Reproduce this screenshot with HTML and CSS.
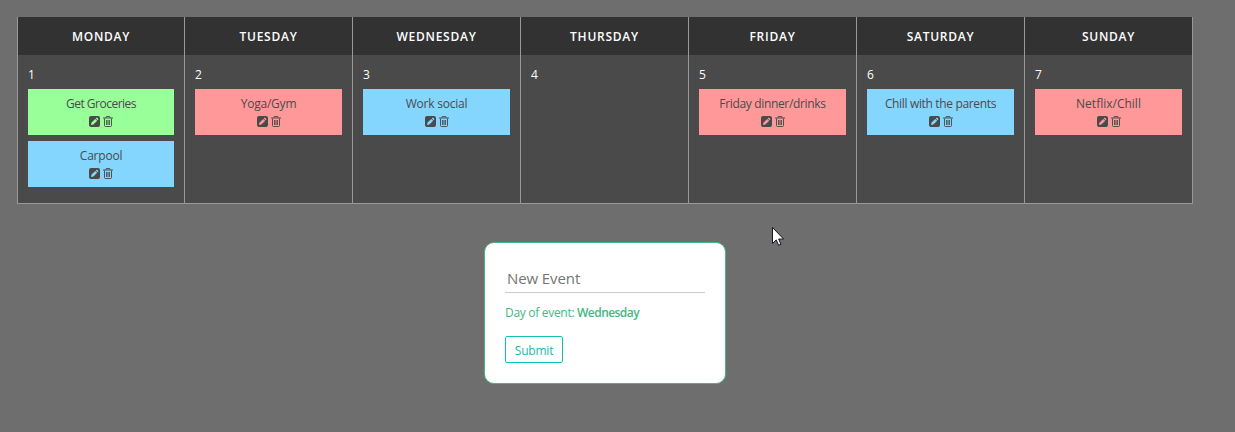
FILE: index.html
```html
<!DOCTYPE html>
<html lang="en">
<head>
<meta charset="utf-8">
<title>Weekly calendar</title>
<link rel="stylesheet" href="styles.css">
</head>
<body>
<svg class="sprite" aria-hidden="true">
  <symbol id="edit" viewBox="0 0 11 11"><path fill-rule="evenodd" d="M2 0h7a2 2 0 0 1 2 2v7a2 2 0 0 1-2 2H2a2 2 0 0 1-2-2V2a2 2 0 0 1 2-2zM2 9l.5-2.4L6.3 2.9l1.9 1.9-3.8 3.8zM6.8 2.4l.6-.6q.4-.3.8 0l1 1q.4.4 0 .8l-.6.7z"/></symbol>
  <symbol id="trash" viewBox="0 0 10 11"><path fill="none" stroke="currentColor" d="M0 2h10M3 2V1.1q0-.6.6-.6h2.8q.6 0 .6.6V2M1.5 2.5v7q0 1 1 1h5q1 0 1-1v-7M3.6 4v5M5 4v5M6.4 4v5" stroke-width=".95"/></symbol>
</svg>
<main class="calendar">
  <section class="day">
    <h2 class="day-name">MONDAY</h2>
    <div class="day-body"><p class="date">1</p>
      <article class="event green"><p class="title tight">Get Groceries</p><div class="actions"><svg class="edit"><use href="#edit"/></svg><svg class="trash"><use href="#trash"/></svg></div></article>
      <article class="event blue"><p class="title">Carpool</p><div class="actions"><svg class="edit"><use href="#edit"/></svg><svg class="trash"><use href="#trash"/></svg></div></article>
    </div>
  </section>
  <section class="day">
    <h2 class="day-name">TUESDAY</h2>
    <div class="day-body"><p class="date">2</p>
      <article class="event red"><p class="title">Yoga/Gym</p><div class="actions"><svg class="edit"><use href="#edit"/></svg><svg class="trash"><use href="#trash"/></svg></div></article>
    </div>
  </section>
  <section class="day">
    <h2 class="day-name">WEDNESDAY</h2>
    <div class="day-body"><p class="date">3</p>
      <article class="event blue"><p class="title">Work social</p><div class="actions"><svg class="edit"><use href="#edit"/></svg><svg class="trash"><use href="#trash"/></svg></div></article>
    </div>
  </section>
  <section class="day">
    <h2 class="day-name">THURSDAY</h2>
    <div class="day-body"><p class="date">4</p></div>
  </section>
  <section class="day">
    <h2 class="day-name">FRIDAY</h2>
    <div class="day-body"><p class="date">5</p>
      <article class="event red"><p class="title long">Friday dinner/drinks</p><div class="actions"><svg class="edit"><use href="#edit"/></svg><svg class="trash"><use href="#trash"/></svg></div></article>
    </div>
  </section>
  <section class="day">
    <h2 class="day-name">SATURDAY</h2>
    <div class="day-body"><p class="date">6</p>
      <article class="event blue"><p class="title long">Chill with the parents</p><div class="actions"><svg class="edit"><use href="#edit"/></svg><svg class="trash"><use href="#trash"/></svg></div></article>
    </div>
  </section>
  <section class="day">
    <h2 class="day-name">SUNDAY</h2>
    <div class="day-body"><p class="date">7</p>
      <article class="event red"><p class="title loose">Netflix/Chill</p><div class="actions"><svg class="edit"><use href="#edit"/></svg><svg class="trash"><use href="#trash"/></svg></div></article>
    </div>
  </section>
</main>
<form class="new-event">
  <input class="name" type="text" placeholder="New Event">
  <p class="chosen">Day of event: <b>Wednesday</b></p>
  <button class="submit" type="button">Submit</button>
</form>
<svg class="cursor" viewBox="0 0 12 19"><path d="M.5.5v16l3.7-3.6 2.4 5.4 2.4-1-2.4-5.3h5z" fill="#fff" stroke="#15151f"/></svg>
</body>
</html>
```
FILE: styles.css
```css
* { box-sizing: border-box; }
body {
  margin: 0;
  padding: 17px;
  height: 432px;
  overflow: hidden;
  background: #6e6e6e;
  font-family: "Open Sans", "Noto Sans", sans-serif;
  font-size: 12px;
}
h2, p { margin: 0; }
.sprite { position: absolute; width: 0; height: 0; }
.calendar {
  display: grid;
  grid-template-columns: repeat(7, 168px);
  width: 1176px;
  height: 187px;
}
.day {
  display: flex;
  flex-direction: column;
  background: #4a4a4a;
  border-right: 1px solid #999;
  border-bottom: 1px solid #999;
}
.day:first-child { border-left: 1px solid #999; }
.day-name {
  height: 38px;
  background: #323232;
  color: #fff;
  font-size: 12px;
  font-weight: 600;
  line-height: 39px;
  letter-spacing: 0.75px;
  text-align: center;
}
.day-body {
  display: flex;
  flex-direction: column;
  padding: 10px 10px 0;
}
.date { height: 24px; line-height: 19px; color: #fff; letter-spacing: -0.3px; }
.event {
  height: 46px;
  margin-bottom: 6px;
  padding-top: 6px;
  color: #4a4a4a;
  text-align: center;
}
.green { background: #99ff99; }
.blue { background: #85d6ff; }
.red { background: #ff9999; }
.title { height: 21px; line-height: 18px; letter-spacing: -0.22px; white-space: nowrap; }
.title.tight { letter-spacing: -0.5px; }
.title.long { letter-spacing: -0.34px; }
.title.loose { letter-spacing: 0; }
.actions { display: flex; justify-content: center; gap: 3px; }
.edit { width: 11px; height: 11px; fill: currentColor; }
.trash { width: 10px; height: 11px; }
.new-event {
  display: flex;
  flex-direction: column;
  align-items: flex-start;
  width: 242px;
  height: 142px;
  margin: 38px 0 0 467px;
  padding: 20px;
  background: #fff;
  border: 1px solid #42b983;
  border-radius: 10px;
}
.name {
  width: 200px;
  height: 30px;
  padding: 3px 2px 2px;
  border: 0;
  border-bottom: 1px solid #ccc;
  outline: 0;
  background: none;
  font: 15px "Open Sans", "Noto Sans", sans-serif;
  letter-spacing: -0.1px;
}
.name::placeholder { color: #757575; }
.chosen { height: 43px; padding-top: 11px; line-height: 18px; color: #42b983; letter-spacing: -0.3px; white-space: nowrap; }
.chosen b { font-weight: 600; letter-spacing: -0.55px; }
.submit {
  width: 58px;
  height: 27px;
  padding: 2px 0 0;
  background: #fff;
  border: 1px solid #12c2b5;
  border-radius: 2px;
  color: #22b8ab;
  font: 12px "Open Sans", "Noto Sans", sans-serif;
  letter-spacing: -0.2px;
}
.cursor { position: absolute; left: 772px; top: 227px; width: 12px; height: 19px; }
```
